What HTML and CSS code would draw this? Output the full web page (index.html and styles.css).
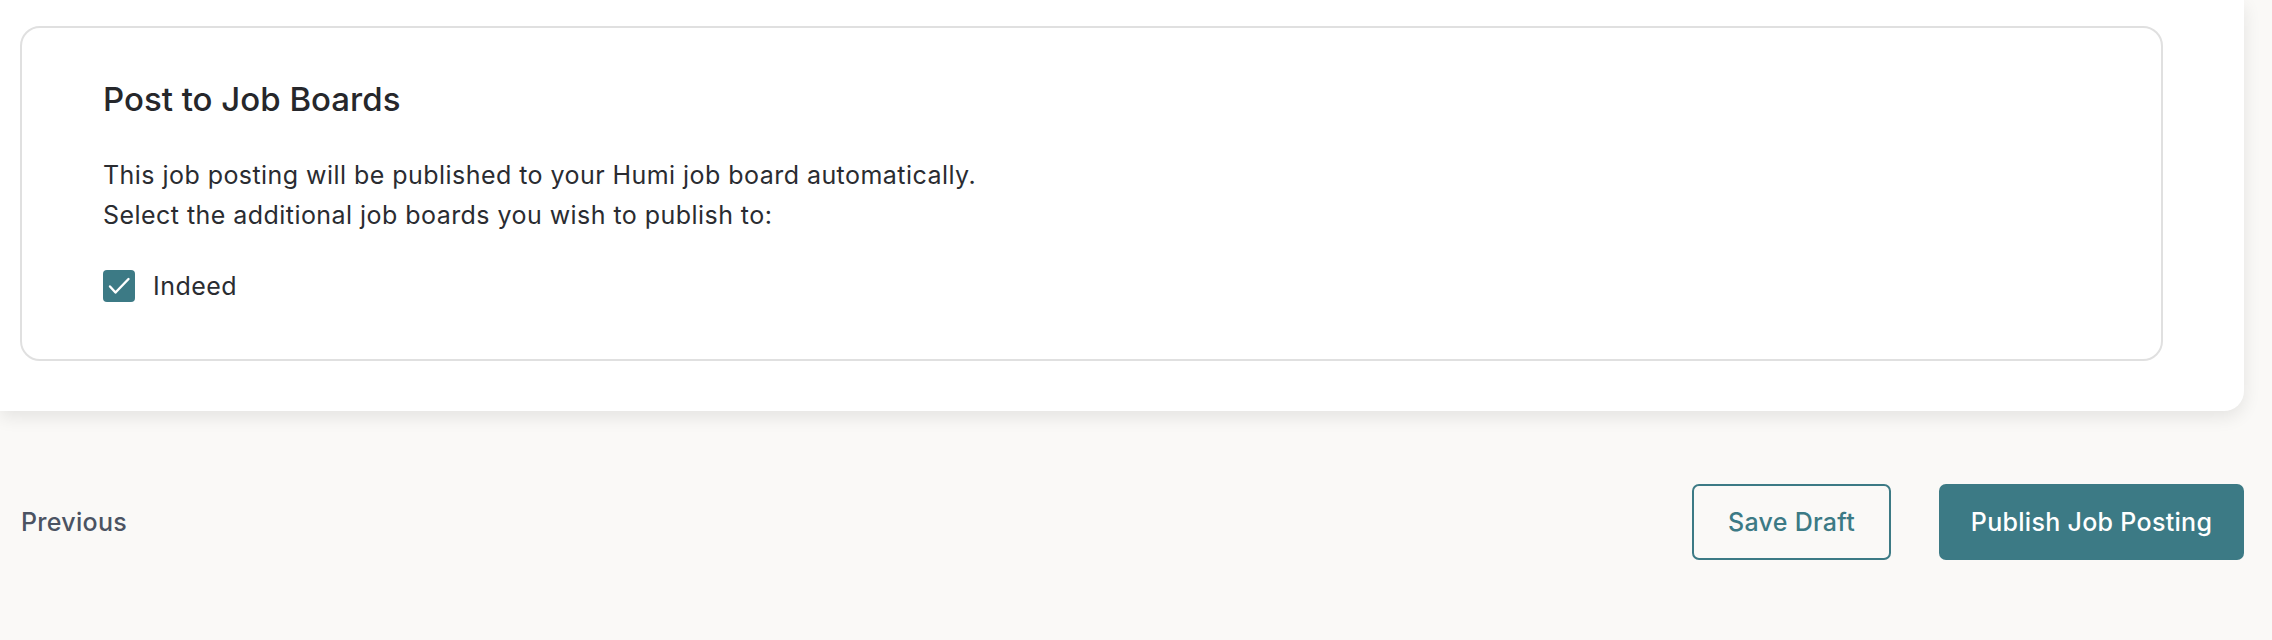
FILE: index.html
```html
<!DOCTYPE html>
<html lang="en">
<head>
  <meta charset="UTF-8">
  <meta name="viewport" content="width=device-width, initial-scale=1.0">
  <title>Post to Job Boards</title>
  <link rel="stylesheet" href="styles.css">
</head>
<body>

<div class="panel">
  <div class="card">
    <h2>Post to Job Boards</h2>

    <p class="intro">
      This job posting will be published to your Humi job board automatically.<br>
      Select the additional job boards you wish to publish to:
    </p>

    <label class="board">
      <span class="check">
        <svg viewBox="0 0 32 32" width="32" height="32">
          <path d="M7 16.5 L12.5 22.5 L25.5 9" fill="none" stroke="#fff" stroke-width="2.4" stroke-linecap="round" stroke-linejoin="round"/>
        </svg>
      </span>
      Indeed
    </label>
  </div>
</div>

<div class="footer">
  <a class="previous" href="#">Previous</a>
  <div class="actions">
    <button class="btn btn-outline">Save Draft</button>
    <button class="btn btn-primary">Publish Job Posting</button>
  </div>
</div>

</body>
</html>
```

FILE: styles.css
```css
body { margin: 0; background-color: #faf9f7; font-family: Inter, "Noto Sans", sans-serif; color: #2a2c31; }
.panel { width: 2244px; box-sizing: border-box; background-color: #ffffff; border-radius: 0 0 20px 0; padding: 26px 81px 50px 20px; box-shadow: 0 6px 18px rgba(0, 0, 0, 0.09); }
.card { border: 2px solid #e0e0e0; border-radius: 20px; padding: 51px 80px 0 81px; height: 335px; box-sizing: border-box; }
h2 { margin: 0 0 36px; font-size: 33px; line-height: 40px; font-weight: 500; color: #26272b; }
.intro { margin: 0 0 35px; font-size: 25px; line-height: 40px; letter-spacing: 0.45px; }
.board { display: flex; align-items: center; gap: 18px; font-size: 25px; line-height: 32px; letter-spacing: 0.45px; }
.check { width: 32px; height: 32px; border-radius: 4px; background-color: #3c7a85; display: block; }
.check svg { display: block; }
.footer { display: flex; justify-content: space-between; align-items: center; padding: 73px 28px 0 21px; }
.previous { font-size: 25px; font-weight: 500; color: #4b5362; text-decoration: none; letter-spacing: 0.3px; }
.actions { display: flex; gap: 48px; }
.btn { font-family: inherit; font-size: 25px; font-weight: 500; letter-spacing: 0.3px; border-radius: 7px; height: 76px; box-sizing: border-box; cursor: pointer; }
.btn-outline { width: 199px; background-color: transparent; border: 2px solid #3c7a85; color: #3c7a85; }
.btn-primary { width: 305px; background-color: #3c7a85; border: none; color: #ffffff; }
```
